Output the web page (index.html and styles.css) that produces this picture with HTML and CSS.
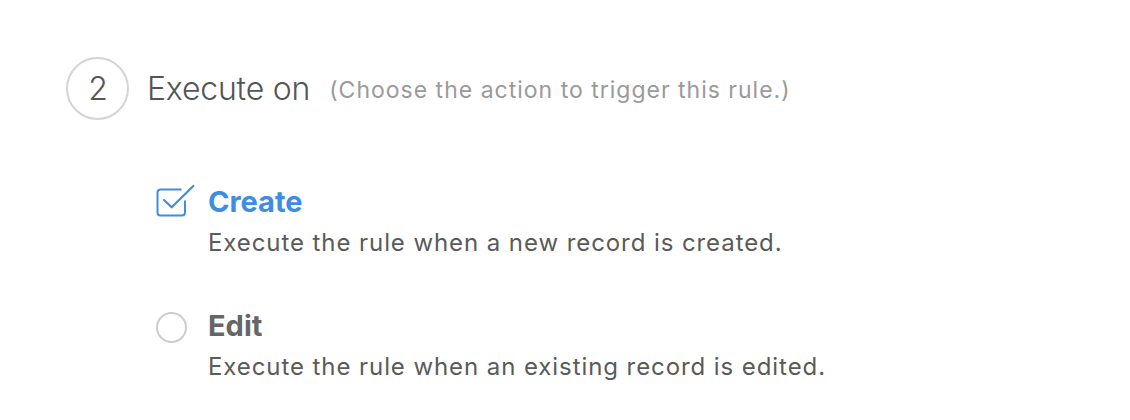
FILE: index.html
```html
<!DOCTYPE html>
<html>
<head>
<meta charset="utf-8">
<link rel="stylesheet" href="styles.css">
</head>
<body>
<div class="page">
  <div class="step-head">
    <div class="step-num">2</div>
    <div class="step-title">Execute on</div>
    <div class="step-hint">(Choose the action to trigger this rule.)</div>
  </div>
  <div class="options">
    <div class="option">
      <div class="control">
        <svg class="check" width="50" height="44" viewBox="0 0 50 44">
          <path d="M31.5 9.5 H10.5 a3 3 0 0 0 -3 3 V32.5 a3 3 0 0 0 3 3 H32 a3 3 0 0 0 3 -3 V20.5" fill="none" stroke="#3d8de3" stroke-width="2"/>
          <path d="M14 20 L21.7 27.3 L43.3 6" fill="none" stroke="#3d8de3" stroke-width="2.2" stroke-linecap="round" stroke-linejoin="round"/>
        </svg>
      </div>
      <div class="text">
        <div class="label label-on">Create</div>
        <div class="desc">Execute the rule when a new record is created.</div>
      </div>
    </div>
    <div class="option">
      <div class="control">
        <span class="radio"></span>
      </div>
      <div class="text">
        <div class="label">Edit</div>
        <div class="desc">Execute the rule when an existing record is edited.</div>
      </div>
    </div>
  </div>
</div>
</body>
</html>
```
FILE: styles.css
```css
html, body {
  margin: 0;
  padding: 0;
  background: #ffffff;
}
body {
  font-family: Inter, "Open Sans", sans-serif;
  color: #555;
}
.page {
  padding: 57px 0 0 66px;
}
.step-head {
  display: flex;
  align-items: center;
  height: 63px;
}
.step-num {
  box-sizing: border-box;
  width: 63px;
  height: 63px;
  border: 2px solid #d4d4d4;
  border-radius: 50%;
  display: flex;
  align-items: center;
  justify-content: center;
  font-size: 32px;
  font-weight: 300;
  line-height: 39px;
  color: #555;
  padding: 0 0 1px 1px;
}
.step-title {
  margin-left: 18px;
  font-size: 32px;
  font-weight: 300;
  line-height: 39px;
  letter-spacing: -0.2px;
  color: #555;
}
.step-hint {
  margin-left: 19px;
  font-size: 23px;
  line-height: 28px;
  letter-spacing: 1px;
  color: #9a9a9a;
  padding-top: 2px;
}
.options {
  margin-top: 64px;
  padding-left: 84px;
  display: flex;
  flex-direction: column;
  gap: 50px;
}
.option {
  display: flex;
  align-items: flex-start;
}
.control {
  width: 58px;
  flex: none;
}
.check {
  display: block;
  margin-top: -4px;
}
.radio {
  display: block;
  box-sizing: border-box;
  width: 31px;
  height: 31px;
  border: 2px solid #cdcdcd;
  border-radius: 50%;
  margin: 4px 0 0 6px;
}
.label {
  font-size: 29px;
  font-weight: 700;
  line-height: 36px;
  color: #666;
}
.label-on {
  color: #3d8de3;
}
.desc {
  margin-top: 8px;
  font-size: 24px;
  line-height: 30px;
  letter-spacing: 0.92px;
  color: #5a5a5a;
}
```
